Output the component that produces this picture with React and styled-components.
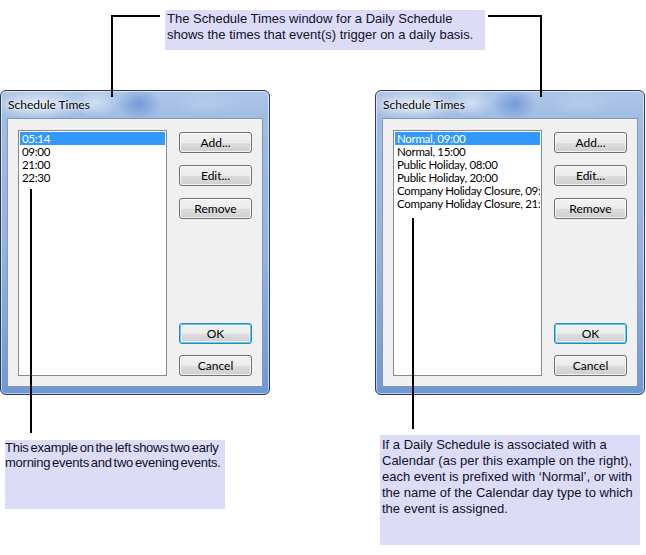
import React from "react";
import styled, { createGlobalStyle, css } from "styled-components";

const GlobalStyle = createGlobalStyle`
  html, body {
    margin: 0;
    padding: 0;
    background: #ffffff;
  }
`;

const leftTimes = ["05:14", "09:00", "21:00", "22:30"];
const rightTimes = [
  "Normal, 09:00",
  "Normal, 15:00",
  "Public Holiday, 08:00",
  "Public Holiday, 20:00",
  "Company Holiday Closure, 09:00",
  "Company Holiday Closure, 21:00",
];

const Dialog = ({ items }) => {
  return (
    <Window>
      <TitleBar>Schedule Times</TitleBar>
      <Client>
        <ListBox>
          {items.map((item, i) => (
            <ListItem key={item} selected={i === 0}>
              {item}
            </ListItem>
          ))}
        </ListBox>
        <ButtonColumn>
          <ButtonGroup>
            <Button>Add...</Button>
            <Button>Edit...</Button>
            <Button>Remove</Button>
          </ButtonGroup>
          <ButtonGroup tight>
            <Button primary>OK</Button>
            <Button>Cancel</Button>
          </ButtonGroup>
        </ButtonColumn>
      </Client>
    </Window>
  );
};

const Connectors = () => (
  <Lines width="646" height="555" viewBox="0 0 646 555">
    <polyline points="160,16 112,16 112,97" />
    <polyline points="488,16 541,16 541,97" />
    <line x1="31" y1="189" x2="31" y2="433" />
    <line x1="413" y1="218" x2="413" y2="429" />
  </Lines>
);

const App = () => {
  return (
    <Page>
      <GlobalStyle />
      <TopRow>
        <Note top>
          The Schedule Times window for a Daily Schedule
          <br />
          shows the times that event(s) trigger on a daily basis.
        </Note>
      </TopRow>
      <DialogRow>
        <Dialog items={leftTimes} />
        <Dialog items={rightTimes} />
      </DialogRow>
      <BottomRow>
        <Note left>
          This example on the left shows two early
          <br />
          morning events and two evening events.
        </Note>
        <Note right>
          If a Daily Schedule is associated with a
          <br />
          Calendar (as per this example on the right),
          <br />
          each event is prefixed with ‘Normal’, or with
          <br />
          the name of the Calendar day type to which
          <br />
          the event is assigned.
        </Note>
      </BottomRow>
      <Connectors />
    </Page>
  );
};

const uiFont = css`
  font-family: "Segoe UI", Lato, "Noto Sans", sans-serif;
  font-size: 12px;
  color: #000;
`;

const Page = styled.div`
  position: relative;
  width: 646px;
  height: 555px;
  overflow: hidden;
  background: #fff;
`;

const TopRow = styled.div`
  display: flex;
  padding: 10px 0 0 165px;
  height: 90px;
  box-sizing: border-box;
`;

const Note = styled.div`
  background: #dcdcf7;
  color: #10102a;
  font-family: "Liberation Sans", Arial, sans-serif;
  font-size: 13px;
  box-sizing: border-box;
  white-space: nowrap;

  ${(p) =>
    p.top &&
    css`
      width: 320px;
      height: 40px;
      line-height: 16px;
      padding: 1px 2px;
    `}

  ${(p) =>
    p.left &&
    css`
      width: 220px;
      height: 69px;
      margin: 45px 0 0 5px;
      line-height: 15px;
      padding: 0;
      letter-spacing: -0.25px;
      word-spacing: -1.5px;
    `}

  ${(p) =>
    p.right &&
    css`
      width: 260px;
      height: 110px;
      margin: 40px 0 0 155px;
      line-height: 16px;
      padding: 2px 2px;
    `}
`;

const DialogRow = styled.div`
  display: flex;
  gap: 105px;
  height: 305px;
`;

const BottomRow = styled.div`
  display: flex;
  align-items: flex-start;
`;

const Window = styled.div`
  width: 270px;
  height: 305px;
  box-sizing: border-box;
  display: flex;
  flex-direction: column;
  border: 1px solid #2e3b4e;
  border-radius: 6px;
  padding: 0 6px 7px 6px;
  box-shadow: inset 0 0 0 1px rgba(255, 255, 255, 0.55);
  background:
    radial-gradient(ellipse 60px 20px at 38px 14px, rgba(255, 255, 255, 0.7), transparent 75%),
    radial-gradient(ellipse 26px 20px at 138px 13px, rgba(80, 128, 208, 0.6), transparent 85%),
    radial-gradient(ellipse 28px 18px at 95px 12px, rgba(240, 246, 255, 0.55), transparent 80%),
    radial-gradient(ellipse 40px 16px at 205px 12px, rgba(190, 210, 238, 0.6), transparent 80%),
    linear-gradient(to bottom, #afc6e7 0, #a0bce3 28px, #92b2df 55%, #6e98d5 100%);
`;

const TitleBar = styled.div`
  ${uiFont}
  height: 27px;
  line-height: 27px;
  padding-left: 1px;
  text-shadow: 0 0 6px rgba(255, 255, 255, 0.9), 0 0 2px rgba(255, 255, 255, 0.8);
`;

const Client = styled.div`
  flex: 1;
  display: flex;
  gap: 12px;
  padding: 11px 10px 10px 10px;
  background: #f0f0f0;
  border: 1px solid #8497b4;
  box-sizing: border-box;
`;

const ListBox = styled.div`
  width: 149px;
  box-sizing: border-box;
  border: 1px solid #828790;
  background: #fff;
  padding: 1px 1px;
  overflow: hidden;
`;

const ListItem = styled.div`
  ${uiFont}
  font-size: 11.5px;
  letter-spacing: -0.3px;
  height: 13px;
  line-height: 13px;
  padding-left: 2px;
  white-space: nowrap;
  overflow: hidden;
  background: ${(p) => (p.selected ? "#3399ff" : "transparent")};
  color: ${(p) => (p.selected ? "#fff" : "#000")};
`;

const ButtonColumn = styled.div`
  display: flex;
  flex-direction: column;
  justify-content: space-between;
  padding-top: 2px;
`;

const ButtonGroup = styled.div`
  display: flex;
  flex-direction: column;
  gap: ${(p) => (p.tight ? "11px" : "12px")};
`;

const Button = styled.div`
  ${uiFont}
  width: 73px;
  height: 21px;
  box-sizing: border-box;
  display: flex;
  align-items: center;
  justify-content: center;
  border-radius: 3px;
  border: 1px solid ${(p) => (p.primary ? "#3c7fb1" : "#707070")};
  background: linear-gradient(to bottom, #f2f2f2 0%, #ebebeb 50%, #dddddd 51%, #cfcfcf 100%);
  box-shadow: ${(p) =>
    p.primary
      ? "inset 0 0 0 1px #48d2ff, inset 0 0 0 2px rgba(255,255,255,0.6)"
      : "inset 0 0 0 1px rgba(255,255,255,0.75)"};
`;

const Lines = styled.svg`
  position: absolute;
  left: 0;
  top: 0;
  pointer-events: none;

  polyline,
  line {
    fill: none;
    stroke: #000;
    stroke-width: 2;
  }
`;

export default App;
